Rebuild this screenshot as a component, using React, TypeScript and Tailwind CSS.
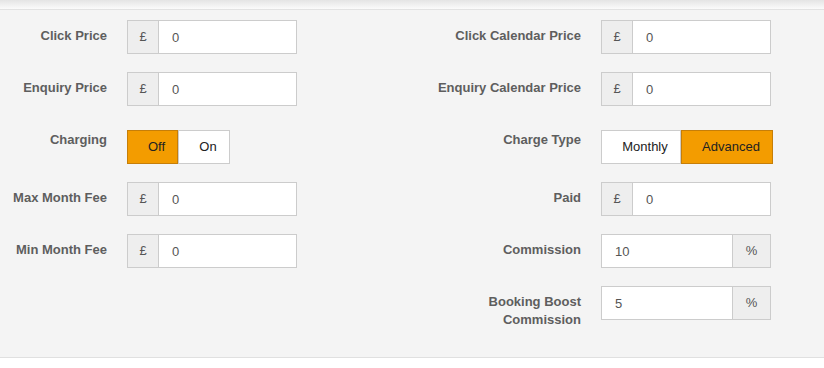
import React from 'react';

const font = { fontFamily: '"Liberation Sans", Arial, sans-serif' };

const Label: React.FC<{ text: string; width: string }> = ({ text, width }) => (
  <label className={`${width} shrink-0 pt-[7px] text-right text-[13px] font-bold leading-[18px] text-[#5e5e5e]`}>
    {text}
  </label>
);

const PoundInput: React.FC<{ value: string }> = ({ value }) => (
  <div className="flex h-[34px] w-[170px]">
    <span className="flex w-[32px] items-center justify-center border border-[#ccc] bg-[#eee] text-[13px] text-[#555]">£</span>
    <input
      readOnly
      value={value}
      className="h-full min-w-0 flex-1 border border-l-0 border-[#ccc] bg-white pl-[13px] text-[13px] text-[#555] outline-none"
    />
  </div>
);

const PercentInput: React.FC<{ value: string }> = ({ value }) => (
  <div className="flex h-[34px] w-[170px]">
    <input
      readOnly
      value={value}
      className="h-full min-w-0 flex-1 border border-[#ccc] bg-white pl-[13px] text-[13px] text-[#555] outline-none"
    />
    <span className="flex w-[38px] items-center justify-center border border-l-0 border-[#ccc] bg-[#eee] text-[13px] text-[#555]">%</span>
  </div>
);

// the button groups sit a little lower than the inputs
const Toggle: React.FC<{ options: { label: string; width: string; active: boolean }[] }> = ({ options }) => (
  <div className="mt-[6px] flex h-[34px]">
    {options.map((o) => (
      <button
        key={o.label}
        className={`${o.width} flex h-full items-center justify-center pl-2 text-[13px] text-[#222] ${
          o.active ? 'border border-[#c67e08] bg-[#f39c00]' : 'border border-[#ccc] bg-white'
        }`}
      >
        {o.label}
      </button>
    ))}
  </div>
);

const Row: React.FC<{ label: string; right?: boolean; children: React.ReactNode }> = ({ label, right, children }) => (
  <div className="flex gap-[20px]">
    <Label text={label} width={right ? 'w-[160px]' : 'w-[107px]'} />
    {children}
  </div>
);

export default function App() {
  return (
    <div className="w-[824px] bg-white" style={font}>
      <div className="h-[10px] border-b border-[#e2e2e2] bg-gradient-to-b from-[#e4e4e4] to-[#fbfbfb]" />
      <div className="grid grid-cols-2 border-b border-[#e0e0e0] bg-[#f4f4f4] py-[10px]">
        {/* left column */}
        <div className="flex flex-col gap-[18px]">
          <Row label="Click Price">
            <PoundInput value="0" />
          </Row>
          <Row label="Enquiry Price">
            <PoundInput value="0" />
          </Row>
          <Row label="Charging">
            <Toggle
              options={[
                { label: 'Off', width: 'w-[51px]', active: true },
                { label: 'On', width: 'w-[52px]', active: false },
              ]}
            />
          </Row>
          <Row label="Max Month Fee">
            <PoundInput value="0" />
          </Row>
          <Row label="Min Month Fee">
            <PoundInput value="0" />
          </Row>
        </div>

        {/* right column */}
        <div className="flex flex-col gap-[18px] pb-[18px] pl-[9px]">
          <Row right label="Click Calendar Price">
            <PoundInput value="0" />
          </Row>
          <Row right label="Enquiry Calendar Price">
            <PoundInput value="0" />
          </Row>
          <Row right label="Charge Type">
            <Toggle
              options={[
                { label: 'Monthly', width: 'w-[80px]', active: false },
                { label: 'Advanced', width: 'w-[92px]', active: true },
              ]}
            />
          </Row>
          <Row right label="Paid">
            <PoundInput value="0" />
          </Row>
          <Row right label="Commission">
            <PercentInput value="10" />
          </Row>
          <div className="flex gap-[20px]">
            <label className="w-[160px] shrink-0 pl-[60px] pt-[7px] text-right text-[13px] font-bold leading-[18px] text-[#5e5e5e]">
              Booking Boost Commission
            </label>
            <PercentInput value="5" />
          </div>
        </div>
      </div>
    </div>
  );
}
